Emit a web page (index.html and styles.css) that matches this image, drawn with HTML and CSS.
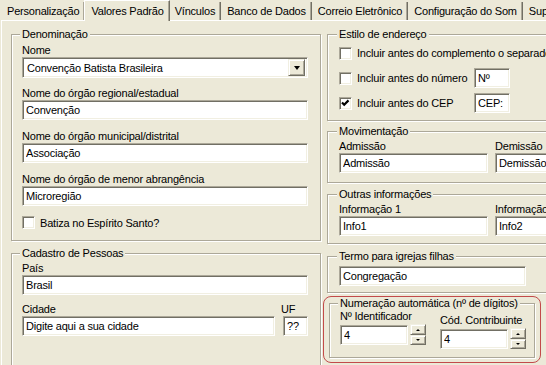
FILE: index.html
```html
<!DOCTYPE html>
<html lang="pt-BR">
<head>
    <meta charset="UTF-8">
    <title>Valores Padrão</title>
    <link rel="stylesheet" href="styles.css">
</head>
<body>

<!-- Abas -->
<div class="tabs">
    <div class="tab">Personalização</div>
    <div class="tab active">Valores Padrão</div>
    <div class="tab">Vínculos</div>
    <div class="tab">Banco de Dados</div>
    <div class="tab">Correio Eletrônico</div>
    <div class="tab">Configuração do Som</div>
    <div class="tab">Suporte</div>
</div>

<div class="panel">
    <!-- Coluna esquerda -->
    <div class="col">
        <fieldset class="group denom">
            <legend>Denominação</legend>
            <label>Nome</label>
            <div class="combo">
                <span class="combo-text">Convenção Batista Brasileira</span>
                <span class="drop"><i></i></span>
            </div>
            <label>Nome do órgão regional/estadual</label>
            <input class="text" type="text" value="Convenção">
            <label>Nome do órgão municipal/distrital</label>
            <input class="text" type="text" value="Associação">
            <label>Nome do órgão de menor abrangência</label>
            <input class="text" type="text" value="Microregião">
            <div class="check-row">
                <span class="check"></span>
                <span class="check-label">Batiza no Espírito Santo?</span>
            </div>
        </fieldset>

        <fieldset class="group cadastro">
            <legend>Cadastro de Pessoas</legend>
            <label>País</label>
            <input class="text" type="text" value="Brasil">
            <div class="city">
                <div>
                    <label>Cidade</label>
                    <input class="text" type="text" value="Digite aqui a sua cidade">
                </div>
                <div>
                    <label class="uf-label">UF</label>
                    <input class="text" type="text" value="??">
                </div>
            </div>
        </fieldset>
    </div>

    <!-- Coluna direita -->
    <div class="col">
        <fieldset class="group estilo">
            <legend>Estilo de endereço</legend>
            <div class="addr-row">
                <span class="check"></span>
                <span class="check-label">Incluir antes do complemento o separador</span>
            </div>
            <div class="addr-row">
                <span class="check"></span>
                <span class="check-label fixed">Incluir antes do número</span>
                <input class="text small" type="text" value="Nº">
            </div>
            <div class="addr-row">
                <span class="check"><svg viewBox="0 0 11 11" width="11" height="11"><polyline points="2,4.5 4.2,6.7 8.5,2.4" fill="none" stroke="#000" stroke-width="2.2"/></svg></span>
                <span class="check-label fixed">Incluir antes do CEP</span>
                <input class="text small" type="text" value="CEP:">
            </div>
        </fieldset>

        <fieldset class="group mov">
            <legend>Movimentação</legend>
            <div class="pair">
                <div>
                    <label>Admissão</label>
                    <input class="text" type="text" value="Admissão">
                </div>
                <div>
                    <label>Demissão</label>
                    <input class="text" type="text" value="Demissão">
                </div>
            </div>
        </fieldset>

        <fieldset class="group outras">
            <legend>Outras informações</legend>
            <div class="pair">
                <div>
                    <label>Informação 1</label>
                    <input class="text" type="text" value="Info1">
                </div>
                <div>
                    <label>Informação 2</label>
                    <input class="text" type="text" value="Info2">
                </div>
            </div>
        </fieldset>

        <fieldset class="group termo">
            <legend>Termo para igrejas filhas</legend>
            <input class="text" type="text" value="Congregação">
        </fieldset>

        <!-- destaque em vermelho -->
        <div class="highlight">
            <fieldset class="group numeracao">
                <legend>Numeração automática (nº de dígitos)</legend>
                <div class="spins">
                    <div>
                        <label>Nº Identificador</label>
                        <div class="spin-field">
                            <input class="text" type="text" value="4">
                            <div class="spin"><span class="up"></span><span class="down"></span></div>
                        </div>
                    </div>
                    <div class="second">
                        <label>Cód. Contribuinte</label>
                        <div class="spin-field">
                            <input class="text" type="text" value="4">
                            <div class="spin"><span class="up"></span><span class="down"></span></div>
                        </div>
                    </div>
                </div>
            </fieldset>
        </div>
    </div>
</div>

</body>
</html>
```

FILE: styles.css
```css
body {
    margin: 0;
    width: 546px;
    height: 365px;
    overflow: hidden;
    background-color: #ece9d8;
    font-family: "Liberation Sans", Arial, sans-serif;
    font-size: 11px;
    letter-spacing: -0.2px;
    color: #000;
}

/* Abas */
.tabs {
    display: flex;
    height: 20px;
    white-space: nowrap;
}
.tab {
    margin-top: 2px;
    height: 18px;
    line-height: 19px;
    padding: 0 5px 0 6px;
    border-right: 1px solid #716f64;
    box-shadow: inset -1px 0 0 #aca899;
}
.tab:first-child {
    padding-left: 7px;
}
.tab.active {
    position: relative;
    z-index: 1;
    margin-top: 0;
    margin-left: -1px;
    height: 20px;
    line-height: 20px;
    padding: 0 5px 0 6px;
    background-color: #ece9d8;
    border-left: 1px solid #fff;
    border-top: 1px solid #fff;
}
.tab.active + .tab {
    padding-left: 5px;
}

/* Painel */
.panel {
    display: grid;
    grid-template-columns: 310px 260px;
    column-gap: 6px;
    align-items: start;
    margin-left: 1px;
    padding: 7px 0 0 9px;
    border-top: 1px solid #fff;
    border-left: 1px solid #fff;
}

/* Molduras */
.group {
    margin: 0;
    padding: 2px 12px 8px 10px;
    border: 1px solid #aca899;
    box-shadow: inset 1px 1px 0 #fff, 1px 1px 0 #fff;
}
.group legend {
    margin-left: -2px;
    padding: 0 2px;
    line-height: 13px;
    background-color: #ece9d8;
    white-space: nowrap;
}
label {
    display: block;
    line-height: 13px;
    white-space: nowrap;
}

.text {
    display: block;
    box-sizing: border-box;
    width: 100%;
    height: 20px;
    margin: 0 0 10px;
    padding: 0 3px;
    font: inherit;
    letter-spacing: inherit;
    color: #000;
    background: #fff;
    border: 1px solid;
    border-color: #aca899 #fff #fff #aca899;
    box-shadow: inset 1px 1px 0 #716f64, inset -1px -1px 0 #f1efe2;
    outline: none;
}

/* Combo */
.combo {
    display: flex;
    align-items: center;
    box-sizing: border-box;
    height: 21px;
    margin-bottom: 9px;
    padding: 2px;
    background: #fff;
    border: 1px solid;
    border-color: #aca899 #fff #fff #aca899;
    box-shadow: inset 1px 1px 0 #716f64, inset -1px -1px 0 #f1efe2;
}
.combo-text {
    flex: 1;
    padding-left: 2px;
}
.drop, .spin span {
    display: flex;
    align-items: center;
    justify-content: center;
    box-sizing: border-box;
    background-color: #ece9d8;
    border: 1px solid;
    border-color: #f1efe2 #716f64 #716f64 #f1efe2;
    box-shadow: inset 1px 1px 0 #fff, inset -1px -1px 0 #aca899;
}
.drop {
    width: 17px;
    height: 17px;
}
.drop i {
    border-left: 3.5px solid transparent;
    border-right: 3.5px solid transparent;
    border-top: 4px solid #000;
}

/* Caixas de seleção */
.check {
    flex: none;
    box-sizing: border-box;
    width: 13px;
    height: 13px;
    margin-right: 5px;
    background: #fff;
    border: 1px solid;
    border-color: #aca899 #fff #fff #aca899;
    box-shadow: inset 1px 1px 0 #716f64, inset -1px -1px 0 #f1efe2;
}
.check svg {
    display: block;
}
.check-row {
    display: flex;
    align-items: center;
    margin-top: 1px;
    height: 13px;
}
.check-label {
    white-space: nowrap;
}
.denom {
    padding-top: 3px;
    padding-bottom: 11px;
}
.cadastro {
    margin-top: 6px;
    padding-bottom: 40px;
}
.cadastro .text:nth-of-type(1) {
    margin-bottom: 8px;
}
.city {
    display: grid;
    grid-template-columns: 253px 25px;
    column-gap: 8px;
}
.uf-label {
    margin-left: -2px;
}

/* Coluna direita */
.estilo {
    padding: 2px 0 7px 11px;
}
.addr-row {
    display: flex;
    align-items: center;
    height: 20px;
    margin-bottom: 5px;
}
.addr-row:last-child {
    margin-bottom: 0;
}
.check-label.fixed {
    width: 117px;
}
.text.small {
    width: 36px;
    margin: 0;
}
.mov, .outras, .termo {
    padding: 2px 0 0 11px;
}
.mov {
    margin-top: 4px;
    padding-bottom: 0;
}
.outras {
    margin-top: 5px;
}
.outras .text {
    margin-bottom: 7px;
}
.mov .text {
    margin-bottom: 9px;
}
.pair {
    display: grid;
    grid-template-columns: 149px 149px;
    column-gap: 7px;
}
.termo {
    margin-top: 6px;
    padding-top: 3px;
}
.termo .text {
    width: 187px;
    margin-bottom: 6px;
}

/* Numeração automática */
.highlight {
    width: 218px;
    box-sizing: border-box;
    margin: 3px 0 0 -4px;
    padding: 0 5px 4px 5px;
    border: 1px solid #c24a4a;
    border-radius: 8px;
}
.numeracao {
    padding: 0 0 8px 10px;
}
.spins {
    display: flex;
    gap: 14px;
}
.spins .second {
    margin-top: 4px;
}
.spin-field {
    display: flex;
    align-items: flex-end;
    margin-top: 1px;
}
.spin-field .text {
    width: 68px;
    margin: 0;
}
.spin {
    display: flex;
    flex-direction: column;
    width: 16px;
    margin-left: 2px;
}
.spin span {
    height: 11px;
}
.spin .down {
    height: 10px;
}
.spin .up::before, .spin .down::before {
    content: "";
    border-left: 2px solid transparent;
    border-right: 2px solid transparent;
}
.spin .up::before {
    border-bottom: 2px solid #000;
}
.spin .down::before {
    border-top: 2px solid #000;
}
```
